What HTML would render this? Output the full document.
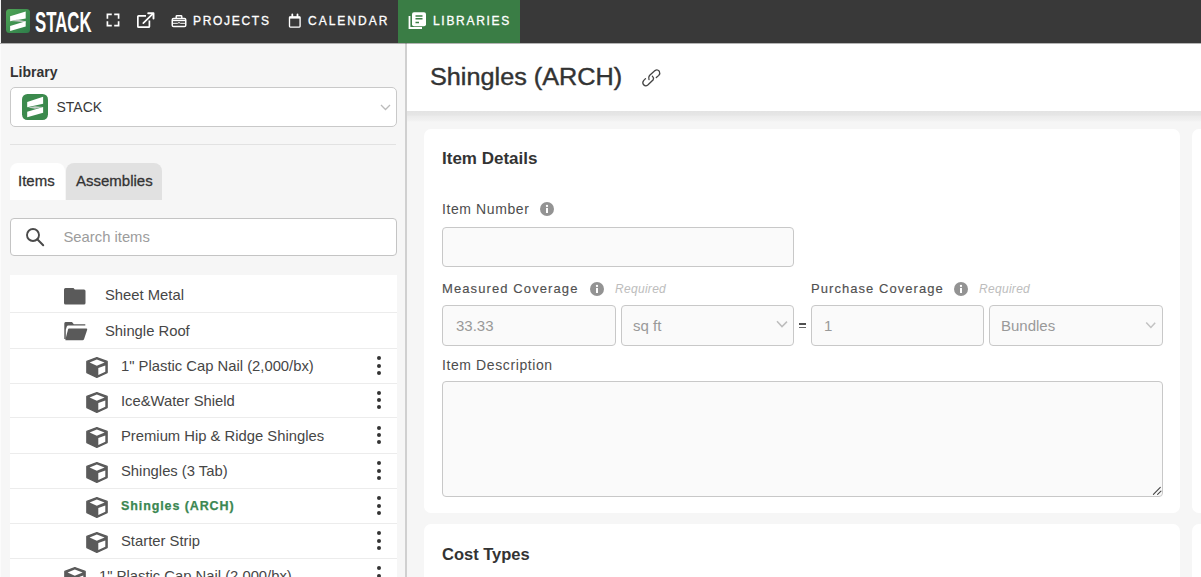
<!DOCTYPE html>
<html><head><meta charset="utf-8">
<style>
*{box-sizing:border-box;margin:0;padding:0}
html,body{width:1201px;height:577px;overflow:hidden;background:#f6f6f6;font-family:"Liberation Sans",sans-serif;color:#333}
.abs{position:absolute}
#hdr{position:absolute;left:0;top:0;width:1201px;height:43px;background:#393939}
#hdr .t{position:absolute;color:#fff;font-weight:normal;font-size:12px;letter-spacing:1.7px;-webkit-text-stroke:0.3px #fff;white-space:nowrap}
#lib{position:absolute;left:398px;top:0;width:122px;height:43px;background:#3a7d45}
#side{position:absolute;left:0;top:43px;width:405px;height:534px;background:#f6f6f6}
#vline{position:absolute;left:405px;top:43px;width:2px;height:534px;background:#d0d0d0}
#main{position:absolute;left:407px;top:43px;width:794px;height:534px;background:#f6f6f6}
#titlebar{position:absolute;left:407px;top:43px;width:794px;height:68px;background:#fff}
.card{position:absolute;background:#fff;border-radius:7px}
.lbl{position:absolute;font-size:14px;letter-spacing:0.6px;color:#4d4d4d;white-space:nowrap}
.inp{position:absolute;background:#fafafa;border:1px solid #c8c8c8;border-radius:4px}
.req{position:absolute;font-size:12px;font-style:italic;color:#bdbdbd;letter-spacing:0.3px;white-space:nowrap}
.info{position:absolute;width:14px;height:14px;border-radius:50%;background:#8a8a8a;color:#fff;font-size:10px;font-weight:bold;text-align:center;line-height:14px}
.row{position:absolute;left:10px;width:387px;height:35px;background:#fff;border-bottom:1px solid #eee}
.rt{position:absolute;font-size:15px;color:#333;white-space:nowrap;top:9px}
.keb{position:absolute;left:367px;top:9px;width:4px;height:18px}
.keb i{position:absolute;left:0;width:4px;height:4px;border-radius:50%;background:#333}
</style></head><body>
<div id="hdr">
  <div class="abs" style="left:0;top:0;width:1px;height:43px;background:#f2f2f2"></div>
  <!-- logo -->
  <svg class="abs" style="left:6px;top:9px" width="24" height="24" viewBox="0 0 24 24">
    <defs><linearGradient id="g1" x1="0" y1="0" x2="1" y2="1"><stop offset="0" stop-color="#4fa556"/><stop offset="1" stop-color="#2e7d4a"/></linearGradient></defs>
    <rect x="0" y="0" width="24" height="24" rx="3.5" fill="url(#g1)"/>
    <path d="M4.1 7.2 L19.7 2.6 V9.6 L4.1 12.2 Z" fill="#fff"/>
    <path d="M5 12.1 L11 10.6 L19.7 12.3 L19.7 13.4 L11 12.6 Z" fill="#b9c4bc"/>
    <path d="M4.1 17.1 L19.7 12.2 V17.6 L4.1 22 Z" fill="#fff"/>
  </svg>
  <div class="abs" style="left:35px;top:5px;color:#fff;font-weight:bold;font-size:30px;transform:scaleX(.56);transform-origin:0 0;letter-spacing:0">STACK</div>
  <svg class="abs" style="left:105.5px;top:13.2px" width="14" height="14" viewBox="0 0 15 15"><g fill="none" stroke="#fff" stroke-width="1.8" stroke-linecap="square"><path d="M1.5 5.3 V1.5 H5.3"/><path d="M9.7 1.5 H13.5 V5.3"/><path d="M13.5 9.7 V13.5 H9.7"/><path d="M5.3 13.5 H1.5 V9.7"/></g></svg>
  <svg class="abs" style="left:136px;top:12px" width="19" height="17" viewBox="0 0 19 17"><g fill="none" stroke="#fff" stroke-width="1.7"><path d="M10 3.85 H2.6 Q1.85 3.85 1.85 4.6 V14.4 Q1.85 15.15 2.6 15.15 H12.6 Q13.4 15.15 13.4 14.4 V8.5"/><path d="M7.3 11.2 L17 1.6" stroke-linecap="round"/><path d="M12.2 1.3 H17.5 V6.6" stroke-linecap="round" stroke-linejoin="round" stroke-width="1.9"/></g></svg>
  <svg class="abs" style="left:171px;top:14px" width="16" height="14" viewBox="0 0 16 14"><g fill="none" stroke="#fff"><rect x="1.25" y="4.6" width="13.5" height="7.9" rx="1.3" stroke-width="1.5"/><path d="M5.2 4.2 V2.5 Q5.2 1.8 5.9 1.8 H10.1 Q10.8 1.8 10.8 2.5 V4.2" stroke-width="1.4"/><path d="M1.25 6.5 H14.75" stroke-width="1.4"/><path d="M1.25 9.3 H6.6 L8 8.5 L9.4 9.3 H14.75" stroke-width="1"/></g></svg>
  <div class="t" style="left:193px;top:13.7px">PROJECTS</div>
  <svg class="abs" style="left:288px;top:13px" width="14" height="16" viewBox="0 0 14 16"><g fill="none" stroke="#fff"><rect x="1.5" y="3.8" width="10.6" height="10.3" rx="0.8" stroke-width="1.35"/><path d="M1.5 4.6 H12.1" stroke-width="2"/><path d="M4.3 1.5 V3.5 M9.5 1.5 V3.5" stroke-width="1.8" stroke-linecap="round"/></g></svg>
  <div class="t" style="left:308px;top:13.7px;letter-spacing:2px">CALENDAR</div>
</div>
<div id="lib"><svg class="abs" style="left:10px;top:12px" width="19" height="18" viewBox="0 0 19 18"><path d="M1.5 4 V16 H14" fill="none" stroke="#fff" stroke-width="1.8"/><rect x="4" y="0.2" width="14" height="14" rx="2" fill="#fff"/><path d="M7.5 3.9 H14.5 M7.5 6.8 H14.5 M7.5 10.4 H11" stroke="#3a7d44" stroke-width="1.5"/></svg><div class="abs" style="left:35px;top:13.7px;color:#fff;font-weight:normal;font-size:12px;letter-spacing:1.7px;-webkit-text-stroke:0.3px #fff;white-space:nowrap">LIBRARIES</div></div>

<div id="side">
  <div class="abs" style="left:10px;top:21px;font-size:14px;font-weight:bold;color:#333">Library</div>
  <div class="abs" style="left:10px;top:44px;width:387px;height:40px;background:#fff;border:1px solid #c9c9c9;border-radius:5px">
    <svg class="abs" style="left:11px;top:6px" width="26" height="26" viewBox="0 0 24 24">
      <rect x="0" y="0" width="24" height="24" rx="5" fill="#3b8a4d"/>
      <path d="M4.8 7.4 L19.5 2.6 V9 L4.8 12.3 Z" fill="#fff"/>
      <path d="M5.5 12.5 L12 11.3 L19.5 12.1 L12 13.6 Z" fill="#c5cec8"/>
      <path d="M4.8 16.3 L19.5 12.1 V17.3 L4.8 21.5 Z" fill="#fff"/>
    </svg>
    <div class="abs" style="left:45.5px;top:10.5px;font-size:14px;color:#383838">STACK</div>
    <svg class="abs" style="left:369px;top:16px" width="11" height="7" viewBox="0 0 11 7"><path d="M1 1 L5.5 5.5 L10 1" stroke="#bbb" stroke-width="1.3" fill="none"/></svg>
  </div>
  <div class="abs" style="left:10px;top:101px;width:386px;height:1px;background:#e2e2e2"></div>
  <div class="abs" style="left:10px;top:120px;width:55px;height:37px;background:#fff;border-radius:8px 8px 0 0"></div>
  <div class="abs" style="left:18px;top:129px;font-size:15px;color:#333;-webkit-text-stroke:0.3px #333">Items</div>
  <div class="abs" style="left:66px;top:120px;width:96px;height:37px;background:#e1e1e1;border-radius:8px 8px 0 0"></div>
  <div class="abs" style="left:76px;top:129px;font-size:15px;color:#333;-webkit-text-stroke:0.3px #333">Assemblies</div>
  <div class="abs" style="left:10px;top:175px;width:387px;height:38px;background:#fff;border:1px solid #c4c4c4;border-radius:4px">
    <svg class="abs" style="left:14px;top:7.5px" width="20" height="20" viewBox="0 0 20 20"><circle cx="8" cy="8" r="6" stroke="#4a4a4a" stroke-width="1.9" fill="none"/><path d="M12.3 12.3 L18.2 18.2" stroke="#4a4a4a" stroke-width="2" stroke-linecap="round"/></svg>
    <div class="abs" style="left:52.5px;top:10px;font-size:14.8px;color:#9c9c9c">Search items</div>
  </div>
</div>
<!--ROWS-->
<div class="abs" style="left:10px;top:275px;width:387px;height:302px;background:#fff"></div>
<svg class="abs" style="left:64px;top:288px" width="22" height="17" viewBox="0 0 22 17"><path d="M1.5 0 H9.5 L10.8 1.4 H20 Q21.5 1.4 21.5 3 V15 Q21.5 16.5 20 16.5 H1.5 Q0 16.5 0 15 V1.5 Q0 0 1.5 0 Z" fill="#5a5a5a"/></svg>
<div class="abs" style="left:105px;top:287.0px;font-size:14.8px;color:#464646;white-space:nowrap">Sheet Metal</div>
<div class="abs" style="left:10px;top:312px;width:387px;height:1px;background:#ececec"></div>
<svg class="abs" style="left:64px;top:322px" width="24" height="19" viewBox="0 0 24 19"><path d="M1.5 0 H8 L9.8 2.2 H21.3 V3.6 H4.2 Q3.2 3.6 2.8 4.6 L1.8 7.8 V17 H0.3 V1.5 Q0.3 0 1.5 0 Z" fill="#5a5a5a"/><path d="M5 6.5 H22.3 Q23.5 6.5 23.2 7.7 L20 17.3 Q19.6 18.3 18.6 18.3 H2 Q1.2 18.3 1.4 17.4 L4 7.5 Q4.3 6.5 5 6.5 Z" fill="#5a5a5a"/></svg>
<div class="abs" style="left:105px;top:322.5px;font-size:14.8px;color:#464646;white-space:nowrap">Shingle Roof</div>
<div class="abs" style="left:10px;top:348px;width:387px;height:1px;background:#ececec"></div>
<svg class="abs" style="left:86px;top:357px" width="22" height="21" viewBox="0 0 22 21"><path d="M10.8 0.6 L21.2 4.4 V15.6 L10.8 20.4 L0.8 15.6 V4.4 Z" fill="#5a5a5a" stroke="#5a5a5a" stroke-width="1.2" stroke-linejoin="round"/><path d="M3.6 5.4 L10.8 2.6 L18.6 5.6 L10.8 8.8 Z" fill="#fff"/><path d="M12.3 11 L19.3 8.6 V14.7 L12.3 17.9 Z" fill="#fff"/></svg>
<div class="abs" style="left:121px;top:358.0px;font-size:14.8px;color:#464646;white-space:nowrap">1&quot; Plastic Cap Nail (2,000/bx)</div>
<div class="abs" style="left:377px;top:356.1px;width:4px;height:4px;border-radius:50%;background:#333"></div><div class="abs" style="left:377px;top:363.5px;width:4px;height:4px;border-radius:50%;background:#333"></div><div class="abs" style="left:377px;top:370.9px;width:4px;height:4px;border-radius:50%;background:#333"></div>
<div class="abs" style="left:10px;top:383px;width:387px;height:1px;background:#ececec"></div>
<svg class="abs" style="left:86px;top:392px" width="22" height="21" viewBox="0 0 22 21"><path d="M10.8 0.6 L21.2 4.4 V15.6 L10.8 20.4 L0.8 15.6 V4.4 Z" fill="#5a5a5a" stroke="#5a5a5a" stroke-width="1.2" stroke-linejoin="round"/><path d="M3.6 5.4 L10.8 2.6 L18.6 5.6 L10.8 8.8 Z" fill="#fff"/><path d="M12.3 11 L19.3 8.6 V14.7 L12.3 17.9 Z" fill="#fff"/></svg>
<div class="abs" style="left:121px;top:392.5px;font-size:14.8px;color:#464646;white-space:nowrap">Ice&amp;Water Shield</div>
<div class="abs" style="left:377px;top:390.6px;width:4px;height:4px;border-radius:50%;background:#333"></div><div class="abs" style="left:377px;top:398.0px;width:4px;height:4px;border-radius:50%;background:#333"></div><div class="abs" style="left:377px;top:405.4px;width:4px;height:4px;border-radius:50%;background:#333"></div>
<div class="abs" style="left:10px;top:417px;width:387px;height:1px;background:#ececec"></div>
<svg class="abs" style="left:86px;top:427px" width="22" height="21" viewBox="0 0 22 21"><path d="M10.8 0.6 L21.2 4.4 V15.6 L10.8 20.4 L0.8 15.6 V4.4 Z" fill="#5a5a5a" stroke="#5a5a5a" stroke-width="1.2" stroke-linejoin="round"/><path d="M3.6 5.4 L10.8 2.6 L18.6 5.6 L10.8 8.8 Z" fill="#fff"/><path d="M12.3 11 L19.3 8.6 V14.7 L12.3 17.9 Z" fill="#fff"/></svg>
<div class="abs" style="left:121px;top:427.5px;font-size:14.8px;color:#464646;white-space:nowrap">Premium Hip &amp; Ridge Shingles</div>
<div class="abs" style="left:377px;top:425.6px;width:4px;height:4px;border-radius:50%;background:#333"></div><div class="abs" style="left:377px;top:433.0px;width:4px;height:4px;border-radius:50%;background:#333"></div><div class="abs" style="left:377px;top:440.4px;width:4px;height:4px;border-radius:50%;background:#333"></div>
<div class="abs" style="left:10px;top:453px;width:387px;height:1px;background:#ececec"></div>
<svg class="abs" style="left:86px;top:462px" width="22" height="21" viewBox="0 0 22 21"><path d="M10.8 0.6 L21.2 4.4 V15.6 L10.8 20.4 L0.8 15.6 V4.4 Z" fill="#5a5a5a" stroke="#5a5a5a" stroke-width="1.2" stroke-linejoin="round"/><path d="M3.6 5.4 L10.8 2.6 L18.6 5.6 L10.8 8.8 Z" fill="#fff"/><path d="M12.3 11 L19.3 8.6 V14.7 L12.3 17.9 Z" fill="#fff"/></svg>
<div class="abs" style="left:121px;top:463.0px;font-size:14.8px;color:#464646;white-space:nowrap">Shingles (3 Tab)</div>
<div class="abs" style="left:377px;top:461.1px;width:4px;height:4px;border-radius:50%;background:#333"></div><div class="abs" style="left:377px;top:468.5px;width:4px;height:4px;border-radius:50%;background:#333"></div><div class="abs" style="left:377px;top:475.9px;width:4px;height:4px;border-radius:50%;background:#333"></div>
<div class="abs" style="left:10px;top:488px;width:387px;height:1px;background:#ececec"></div>
<svg class="abs" style="left:86px;top:497px" width="22" height="21" viewBox="0 0 22 21"><path d="M10.8 0.6 L21.2 4.4 V15.6 L10.8 20.4 L0.8 15.6 V4.4 Z" fill="#5a5a5a" stroke="#5a5a5a" stroke-width="1.2" stroke-linejoin="round"/><path d="M3.6 5.4 L10.8 2.6 L18.6 5.6 L10.8 8.8 Z" fill="#fff"/><path d="M12.3 11 L19.3 8.6 V14.7 L12.3 17.9 Z" fill="#fff"/></svg>
<div class="abs" style="left:121px;top:498.5px;font-size:12.5px;font-weight:bold;letter-spacing:0.9px;color:#3b8752;-webkit-text-stroke:0.25px #3b8752;white-space:nowrap">Shingles (ARCH)</div>
<div class="abs" style="left:377px;top:496.1px;width:4px;height:4px;border-radius:50%;background:#333"></div><div class="abs" style="left:377px;top:503.5px;width:4px;height:4px;border-radius:50%;background:#333"></div><div class="abs" style="left:377px;top:510.9px;width:4px;height:4px;border-radius:50%;background:#333"></div>
<div class="abs" style="left:10px;top:523px;width:387px;height:1px;background:#ececec"></div>
<svg class="abs" style="left:86px;top:532px" width="22" height="21" viewBox="0 0 22 21"><path d="M10.8 0.6 L21.2 4.4 V15.6 L10.8 20.4 L0.8 15.6 V4.4 Z" fill="#5a5a5a" stroke="#5a5a5a" stroke-width="1.2" stroke-linejoin="round"/><path d="M3.6 5.4 L10.8 2.6 L18.6 5.6 L10.8 8.8 Z" fill="#fff"/><path d="M12.3 11 L19.3 8.6 V14.7 L12.3 17.9 Z" fill="#fff"/></svg>
<div class="abs" style="left:121px;top:533.0px;font-size:14.8px;color:#464646;white-space:nowrap">Starter Strip</div>
<div class="abs" style="left:377px;top:531.1px;width:4px;height:4px;border-radius:50%;background:#333"></div><div class="abs" style="left:377px;top:538.5px;width:4px;height:4px;border-radius:50%;background:#333"></div><div class="abs" style="left:377px;top:545.9px;width:4px;height:4px;border-radius:50%;background:#333"></div>
<div class="abs" style="left:10px;top:558px;width:387px;height:1px;background:#ececec"></div>
<svg class="abs" style="left:64px;top:567px" width="22" height="21" viewBox="0 0 22 21"><path d="M10.8 0.6 L21.2 4.4 V15.6 L10.8 20.4 L0.8 15.6 V4.4 Z" fill="#5a5a5a" stroke="#5a5a5a" stroke-width="1.2" stroke-linejoin="round"/><path d="M3.6 5.4 L10.8 2.6 L18.6 5.6 L10.8 8.8 Z" fill="#fff"/><path d="M12.3 11 L19.3 8.6 V14.7 L12.3 17.9 Z" fill="#fff"/></svg>
<div class="abs" style="left:99px;top:568.0px;font-size:14.8px;color:#464646;white-space:nowrap">1&quot; Plastic Cap Nail (2,000/bx)</div>
<div class="abs" style="left:377px;top:566.1px;width:4px;height:4px;border-radius:50%;background:#333"></div><div class="abs" style="left:377px;top:573.5px;width:4px;height:4px;border-radius:50%;background:#333"></div><div class="abs" style="left:377px;top:580.9px;width:4px;height:4px;border-radius:50%;background:#333"></div>
<!--/ROWS-->
<div id="vline"></div>
<div class="abs" style="left:0;top:43px;width:1px;height:534px;background:#fbfbfb"></div>
<div id="main"></div>
<div class="abs" style="left:407px;top:111px;width:794px;height:12px;background:linear-gradient(#e3e3e3 0,#e6e6e6 4px,#ececec 5.5px,#f0f0f0 9px,#f6f6f6 11px)"></div>
<div id="titlebar">
  <div class="abs" style="left:23px;top:21px;font-size:23px;color:#333;white-space:nowrap;transform:scaleX(1.097);transform-origin:0 0;-webkit-text-stroke:0.4px #333">Shingles (ARCH)</div>
  <svg class="abs" style="left:223px;top:18px" width="40" height="35" viewBox="0 0 40 35"><g fill="none" stroke="#444" stroke-width="1.3" stroke-linecap="round"><path d="M15.5 17.6 L13.6 19.6 Q12 21.8 13.6 23.8 Q15.6 25.8 17.8 24 L23.2 18.8 Q24.2 16.8 22.4 15.2"/><path d="M19 18.6 Q18.2 16.2 19.5 14.5 L25 9.6 Q27.3 8 29.3 10.2 Q30.5 12.5 28.8 14.4 L26.3 16.6"/></g></svg>
</div>
<div class="card" style="left:424px;top:129px;width:756px;height:384px"></div>
<div class="abs" style="left:442px;top:149px;font-size:17px;font-weight:bold;color:#333;white-space:nowrap">Item Details</div>
<div class="lbl" style="left:442px;top:201px">Item Number</div>
<svg class="abs" style="left:540px;top:202px" width="14" height="14" viewBox="0 0 14 14"><circle cx="7" cy="7" r="7" fill="#939393"/><circle cx="7" cy="4" r="1.15" fill="#fff"/><rect x="6" y="6" width="2" height="5" fill="#fff"/></svg>
<div class="inp" style="left:442px;top:227px;width:352px;height:40px"></div>
<div class="lbl" style="left:442px;top:281px;font-size:13px;letter-spacing:1.1px;color:#505050;-webkit-text-stroke:0.15px #505050">Measured Coverage</div>
<svg class="abs" style="left:590px;top:282px" width="14" height="14" viewBox="0 0 14 14"><circle cx="7" cy="7" r="7" fill="#939393"/><circle cx="7" cy="4" r="1.15" fill="#fff"/><rect x="6" y="6" width="2" height="5" fill="#fff"/></svg>
<div class="req" style="left:615px;top:282px">Required</div>
<div class="inp" style="left:442px;top:305px;width:174px;height:41px"></div>
<div class="abs" style="left:456px;top:317px;font-size:15px;color:#999">33.33</div>
<div class="inp" style="left:621px;top:305px;width:173px;height:41px"></div>
<div class="abs" style="left:633px;top:317px;font-size:15px;color:#999">sq ft</div>
<svg class="abs" style="left:776px;top:320px" width="12" height="8" viewBox="0 0 12 8"><path d="M1 1.3 L6 6.6 L11 1.6" stroke="#bdbdbd" stroke-width="1.5" fill="none"/></svg>
<div class="abs" style="left:799px;top:323px;width:7px;height:1.6px;background:#505050"></div><div class="abs" style="left:799px;top:326.6px;width:7px;height:1.4px;background:#666"></div>
<div class="lbl" style="left:811px;top:281px;font-size:13px;letter-spacing:1.05px;color:#505050;-webkit-text-stroke:0.15px #505050">Purchase Coverage</div>
<svg class="abs" style="left:954px;top:282px" width="14" height="14" viewBox="0 0 14 14"><circle cx="7" cy="7" r="7" fill="#939393"/><circle cx="7" cy="4" r="1.15" fill="#fff"/><rect x="6" y="6" width="2" height="5" fill="#fff"/></svg>
<div class="req" style="left:979px;top:282px">Required</div>
<div class="inp" style="left:811px;top:305px;width:173px;height:41px"></div>
<div class="abs" style="left:824px;top:317px;font-size:15px;color:#999">1</div>
<div class="inp" style="left:989px;top:305px;width:174px;height:41px"></div>
<div class="abs" style="left:1001px;top:317px;font-size:15px;color:#999">Bundles</div>
<svg class="abs" style="left:1145px;top:321px" width="12" height="8" viewBox="0 0 12 8"><path d="M1.2 1.4 L5.9 6.5 L10.2 1.8" stroke="#c2c2c2" stroke-width="1.5" fill="none"/></svg>
<div class="lbl" style="left:442px;top:357px">Item Description</div>
<div class="inp" style="left:442px;top:381px;width:721px;height:116px"></div>
<svg class="abs" style="left:1152px;top:486px" width="10" height="10" viewBox="0 0 10 10"><path d="M1.4 8.3 L8.3 1.3 M5.6 8.3 L9 5.2" stroke="#444" stroke-width="1.1" stroke-linecap="round"/></svg>
<div class="card" style="left:424px;top:524px;width:756px;height:100px"></div>
<div class="abs" style="left:442px;top:545px;font-size:16.5px;font-weight:bold;color:#333;white-space:nowrap">Cost Types</div>
<div class="card" style="left:1192px;top:129px;width:100px;height:384px"></div>
<div class="card" style="left:1192px;top:524px;width:100px;height:100px"></div>
<div class="abs" style="left:0;top:43px;width:1201px;height:1px;background:rgba(40,40,40,.35)"></div>
</body></html>
